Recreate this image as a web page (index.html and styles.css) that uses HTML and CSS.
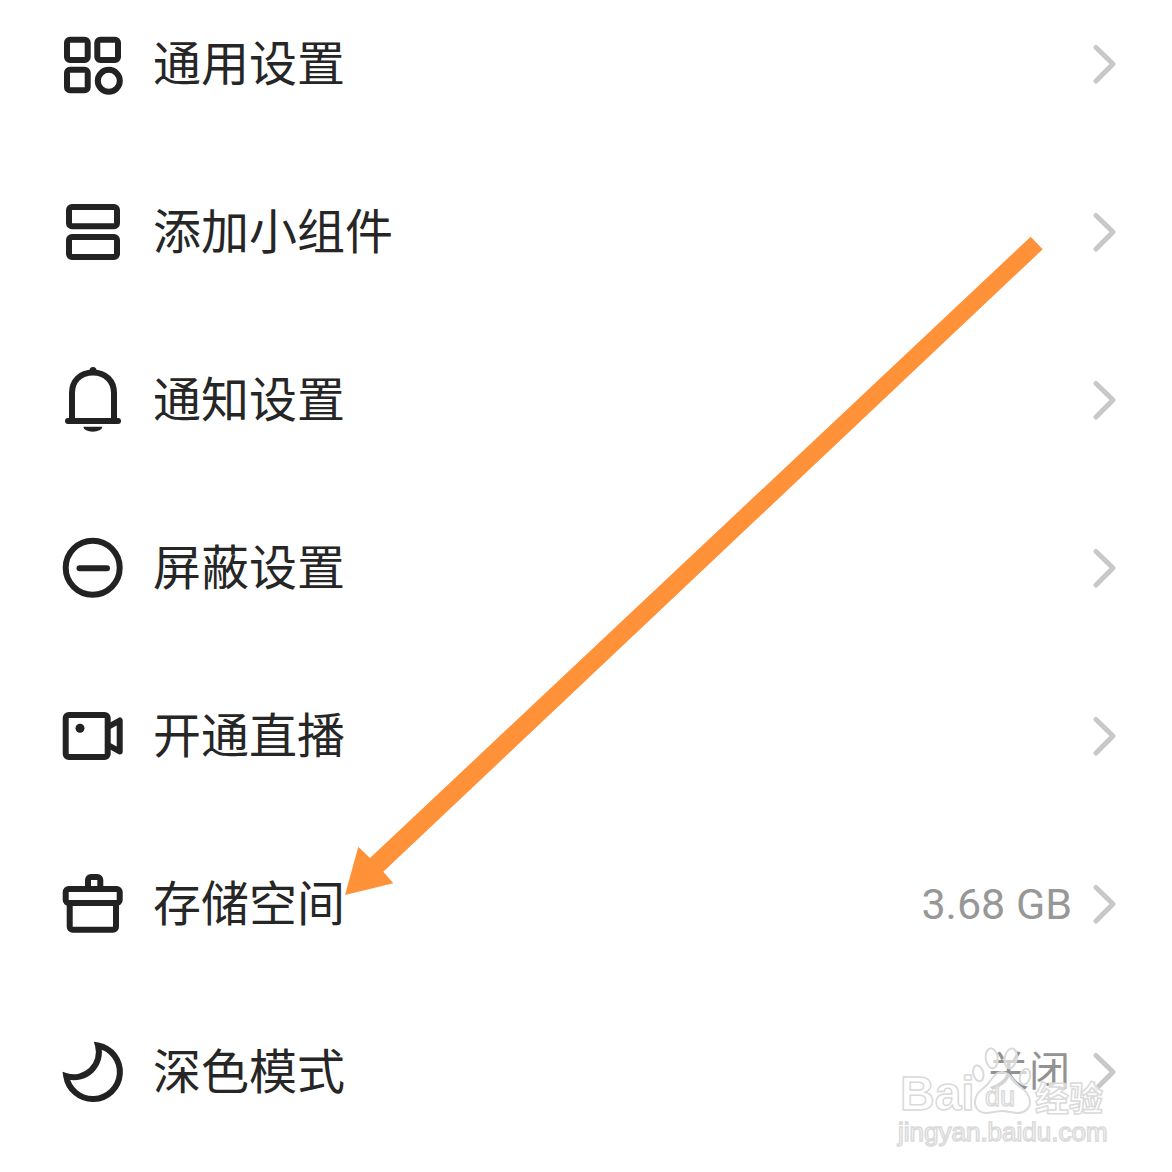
FILE: index.html
```html
<!DOCTYPE html>
<html lang="zh-CN">
<head>
<meta charset="utf-8">
<title>设置</title>
<link rel="stylesheet" href="styles.css">
</head>
<body>
<main class="page">
  <ul class="list">
    <li class="row">
      <svg class="icon" viewBox="0 0 64 64"><rect class="ln" x="5" y="7.7" width="20.7" height="20.3" rx="3"/><rect class="ln" x="35.3" y="7.7" width="20.7" height="20.3" rx="3"/><rect class="ln" x="5" y="37.7" width="20.7" height="20.6" rx="3"/><circle class="ln" cx="46.8" cy="48.8" r="11"/></svg>
      <span class="label">通用设置</span>
      <svg class="chev" viewBox="0 0 24 40"><path d="M3 3.500 L20 20 L3 37"/></svg>
    </li>
    <li class="row">
      <svg class="icon" viewBox="0 0 64 64"><rect class="ln" x="7" y="7" width="48" height="19.300" rx="3"/><rect class="ln" x="7" y="37" width="48" height="20" rx="3"/></svg>
      <span class="label">添加小组件</span>
      <svg class="chev" viewBox="0 0 24 40"><path d="M3 3.500 L20 20 L3 37"/></svg>
    </li>
    <li class="row">
      <svg class="icon" viewBox="0 0 64 64"><path class="ln" d="M10 52 V25 C10 13 18 4.500 31 4.500 C43.500 4.500 52 13 52 25 V52"/><path class="ln" d="M6 53 H56"/><circle class="fl" cx="31" cy="2.500" r="3.500"/><path class="fl" d="M21.300 58.700 H40.300 A9.500 5 0 0 1 21.300 58.700 Z"/></svg>
      <span class="label">通知设置</span>
      <svg class="chev" viewBox="0 0 24 40"><path d="M3 3.500 L20 20 L3 37"/></svg>
    </li>
    <li class="row">
      <svg class="icon" viewBox="0 0 64 64"><circle class="ln" cx="30.700" cy="31.800" r="27"/><path class="ln" d="M17.500 32.300 H45"/></svg>
      <span class="label">屏蔽设置</span>
      <svg class="chev" viewBox="0 0 24 40"><path d="M3 3.500 L20 20 L3 37"/></svg>
    </li>
    <li class="row">
      <svg class="icon" viewBox="0 0 64 64"><rect class="ln" x="3.700" y="11" width="42" height="42" rx="3"/><circle class="fl" cx="18" cy="24.300" r="4.500"/><path class="ln" d="M46 23 L57.700 16.500 V47.500 L46 41"/></svg>
      <span class="label">开通直播</span>
      <svg class="chev" viewBox="0 0 24 40"><path d="M3 3.500 L20 20 L3 37"/></svg>
    </li>
    <li class="row">
      <svg class="icon" viewBox="0 0 64 64"><rect class="ln" x="3.700" y="17" width="54" height="14" rx="3"/><path class="ln" d="M7.700 32 V54.700 a3 3 0 0 0 3 3 H51 a3 3 0 0 0 3 -3 V32"/><path class="ln" d="M26 17 V8 a3 3 0 0 1 3 -3 H35.300 a3 3 0 0 1 3 3 V17"/></svg>
      <span class="label">存储空间</span>
      <span class="value">3.68 GB</span>
      <svg class="chev" viewBox="0 0 24 40"><path d="M3 3.500 L20 20 L3 37"/></svg>
    </li>
    <li class="row">
      <svg class="icon" viewBox="0 0 64 64"><path class="ln ln-sharp" d="M36 5.500 A27 27 0 1 1 4.200 36 A25 25 0 0 0 36 5.500 Z"/></svg>
      <span class="label">深色模式</span>
      <span class="value value-cjk">关闭</span>
      <svg class="chev" viewBox="0 0 24 40"><path d="M3 3.500 L20 20 L3 37"/></svg>
    </li>
  </ul>

  <svg class="arrow" viewBox="0 0 1172 1172"><polygon points="1030.700,236.700 1042.700,249.300 383.300,871.700 393.300,883.300 345,895 358.300,846.700 370,858"/></svg>

  <div class="mark">
    <span class="mark-bai">Bai</span>
    <svg class="mark-paw" viewBox="0 0 60 68">
      <ellipse cx="6.300" cy="27.300" rx="5" ry="8" transform="rotate(-15 6.300 27.300)"/>
      <ellipse cx="19.700" cy="12.300" rx="6" ry="10" transform="rotate(-8 19.700 12.300)"/>
      <ellipse cx="38.700" cy="12.300" rx="6" ry="10" transform="rotate(10 38.700 12.300)"/>
      <ellipse cx="53" cy="30.700" rx="5" ry="8" transform="rotate(15 53 30.700)"/>
      <path d="M30 26 C37 26 40 33 46 39 C52 44 58 48 58 56 C58 63 52 67 46 67 C40 67 36 65 30 65 C24 65 20 67 14 67 C8 67 3 63 3 56 C3 48 9 44 15 39 C20 33 23 26 30 26 Z"/>
    </svg>
    <span class="mark-du">du</span>
    <span class="mark-cn">经验</span>
    <span class="mark-url">jingyan.baidu.com</span>
  </div>
</main>
</body>
</html>
```

FILE: styles.css
```css
* { box-sizing: border-box; }
html, body { margin: 0; padding: 0; background: #fff; }
body { font-family: "Noto Sans CJK SC", "Noto Sans", sans-serif; color: #222; }
.page { position: relative; width: 1172px; height: 1172px; overflow: hidden; }
.list { list-style: none; margin: -20px 0 0; padding: 0 55px 0 62px; }
.row { display: flex; align-items: center; height: 168px; }
.icon { width: 64px; height: 64px; flex: none; overflow: visible; margin-right: 27px; }
.ln { fill: none; stroke: #222; stroke-width: 6; stroke-linejoin: round; stroke-linecap: round; }
.ln-sharp { stroke-linejoin: miter; }
.fl { fill: #222; }
.label { font-size: 48px; line-height: 60px; padding-bottom: 8px; white-space: nowrap; color: #262626; }
.value { margin-left: auto; margin-right: 21px; font-family: "Roboto", sans-serif; font-size: 43px; line-height: 50px; font-weight: 400; color: #979797; white-space: nowrap; }
.value-cjk { font-family: "Noto Sans CJK SC", sans-serif; font-size: 41px; padding-bottom: 8px; color: #929292; margin-right: 23px; }
.chev { width: 24px; height: 40px; flex: none; }
.row > .label + .chev { margin-left: auto; }
.chev path { fill: none; stroke: #c8c8c8; stroke-width: 5; stroke-linecap: round; stroke-linejoin: round; }
.arrow { position: absolute; left: 0; top: 0; width: 1172px; height: 1172px; pointer-events: none; }
.arrow polygon { fill: #ff9239; }
.mark { position: absolute; left: 890px; top: 1040px; width: 230px; height: 120px; color: rgba(255,255,255,.7); -webkit-text-stroke: 1.500px #dadada; }
.mark span { position: absolute; white-space: nowrap; font-family: "Liberation Sans", "Noto Sans CJK SC", sans-serif; }
.mark-bai { left: 10px; top: 26px; font-size: 48px; line-height: 56px; font-weight: 700; }
.mark-paw { position: absolute; left: 82px; top: 6px; width: 60px; height: 68px; overflow: visible; }
.mark-paw ellipse, .mark-paw path { fill: rgba(255,255,255,.6); stroke: #dadada; stroke-width: 2; }
.mark .mark-du { left: 95px; top: 41px; font-size: 27px; line-height: 32px; font-weight: 400; }
.mark .mark-cn { left: 145px; top: 35px; font-family: "Noto Sans CJK SC", sans-serif; font-size: 34px; line-height: 44px; font-weight: 700; }
.mark-url { left: 8px; top: 76px; font-size: 26px; line-height: 32px; }
```
